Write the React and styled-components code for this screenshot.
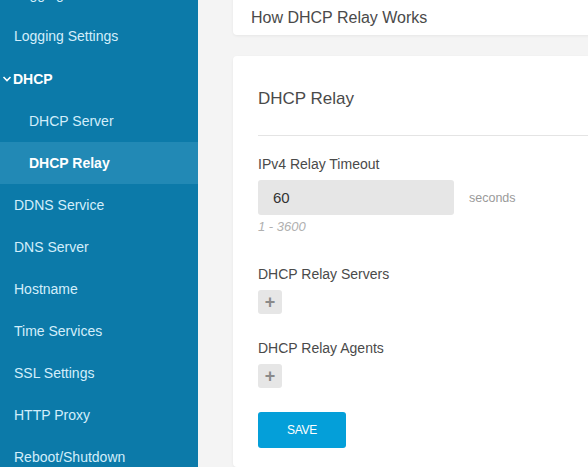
import React from "react";
import styled, { createGlobalStyle } from "styled-components";

const GlobalStyle = createGlobalStyle`
  html, body {
    margin: 0;
    padding: 0;
    overflow: hidden;
    background: #f4f4f4;
    font-family: "Liberation Sans", Arial, sans-serif;
  }
`;

const menu = [
  { label: "Logging", cut: true },
  { label: "Logging Settings" },
  { label: "DHCP", group: true },
  { label: "DHCP Server", sub: true },
  { label: "DHCP Relay", sub: true, active: true },
  { label: "DDNS Service" },
  { label: "DNS Server" },
  { label: "Hostname" },
  { label: "Time Services" },
  { label: "SSL Settings" },
  { label: "HTTP Proxy" },
  { label: "Reboot/Shutdown" },
];

function App() {
  return (
    <Page>
      <GlobalStyle />
      <Sidebar>
        {menu.map((m) => (
          <NavItem
            key={m.label}
            $active={m.active}
            $sub={m.sub}
            $group={m.group}
          >
            {m.group && (
              <Chevron viewBox="0 0 10 10">
                <path d="M1.5 3 L5 6.5 L8.5 3" fill="none" stroke="#fff" strokeWidth="1.6" />
              </Chevron>
            )}
            {m.label}
          </NavItem>
        ))}
      </Sidebar>
      <Main>
        <TopCard>How DHCP Relay Works</TopCard>
        <Card>
          <Title>DHCP Relay</Title>
          <Divider />
          <Label>IPv4 Relay Timeout</Label>
          <InputRow>
            <Input defaultValue="60" />
            <Unit>seconds</Unit>
          </InputRow>
          <Hint>1 - 3600</Hint>
          <Label $top={31}>DHCP Relay Servers</Label>
          <AddBtn>+</AddBtn>
          <Label $top={26}>DHCP Relay Agents</Label>
          <AddBtn>+</AddBtn>
          <SaveBtn>SAVE</SaveBtn>
        </Card>
      </Main>
    </Page>
  );
}

export default App;

const Page = styled.div`
  display: flex;
  height: 467px;
  width: 588px;
  overflow: hidden;
`;

const Sidebar = styled.div`
  width: 198px;
  flex-shrink: 0;
  background: #0c7aa9;
  margin-top: -27px;
  display: flex;
  flex-direction: column;
`;

const NavItem = styled.div`
  height: ${(p) => (p.$group ? "43px" : "42px")};
  flex-shrink: 0;
  display: flex;
  align-items: center;
  padding-left: ${(p) => (p.$sub ? "29px" : p.$group ? "2px" : "14px")};
  font-size: 14px;
  color: ${(p) => (p.$active || p.$group ? "#ffffff" : "#d3eefb")};
  font-weight: ${(p) => (p.$active || p.$group ? 700 : 400)};
  background: ${(p) => (p.$active ? "#2289b5" : "transparent")};
`;

const Chevron = styled.svg`
  width: 10px;
  height: 10px;
  margin-right: 1px;
`;

const Main = styled.div`
  flex: 1;
  padding-left: 35px;
  display: flex;
  flex-direction: column;
  min-width: 0;
`;

const TopCard = styled.div`
  margin-top: -15px;
  height: 50px;
  width: 420px;
  flex-shrink: 0;
  background: #fff;
  border-radius: 4px;
  box-shadow: 0 1px 3px rgba(0, 0, 0, 0.06);
  display: flex;
  align-items: center;
  padding: 15px 0 0 18px;
  box-sizing: border-box;
  font-size: 16px;
  color: #4a4a4a;
`;

const Card = styled.div`
  margin-top: 21px;
  width: 420px;
  flex: 1;
  background: #fff;
  border-radius: 4px;
  box-shadow: 0 1px 3px rgba(0, 0, 0, 0.06);
  padding: 0 0 0 25px;
  display: flex;
  flex-direction: column;
  align-items: flex-start;
`;

const Title = styled.div`
  margin-top: 33px;
  font-size: 17px;
  line-height: 20px;
  color: #4a4a4a;
`;

const Divider = styled.div`
  margin-top: 26px;
  height: 1px;
  align-self: stretch;
  background: #e4e4e4;
`;

const Label = styled.div`
  margin-top: ${(p) => p.$top || 20}px;
  font-size: 14px;
  line-height: 16px;
  color: #4a4a4a;
`;

const InputRow = styled.div`
  margin-top: 8px;
  display: flex;
  align-items: center;
  gap: 15px;
`;

const Input = styled.input`
  width: 196px;
  height: 35px;
  box-sizing: border-box;
  border: none;
  border-radius: 3px;
  background: #e6e6e6;
  padding: 0 15px;
  font-family: "Liberation Sans", Arial, sans-serif;
  font-size: 15px;
  color: #333;
  outline: none;
`;

const Unit = styled.span`
  font-size: 12.5px;
  color: #9a9a9a;
`;

const Hint = styled.div`
  margin-top: 4px;
  font-size: 13px;
  line-height: 16px;
  font-style: italic;
  color: #b0b0b0;
`;

const AddBtn = styled.button`
  margin-top: 8px;
  width: 24px;
  height: 24px;
  border: none;
  border-radius: 3px;
  background: #e6e6e6;
  color: #8a8a8a;
  font-family: "Liberation Sans", Arial, sans-serif;
  font-size: 18px;
  font-weight: 700;
  line-height: 24px;
  padding: 0;
`;

const SaveBtn = styled.button`
  margin-top: 24px;
  width: 88px;
  height: 36px;
  border: none;
  border-radius: 3px;
  background: #049fd9;
  color: #fff;
  font-family: "Liberation Sans", Arial, sans-serif;
  font-size: 12px;
  letter-spacing: -0.3px;
`;
